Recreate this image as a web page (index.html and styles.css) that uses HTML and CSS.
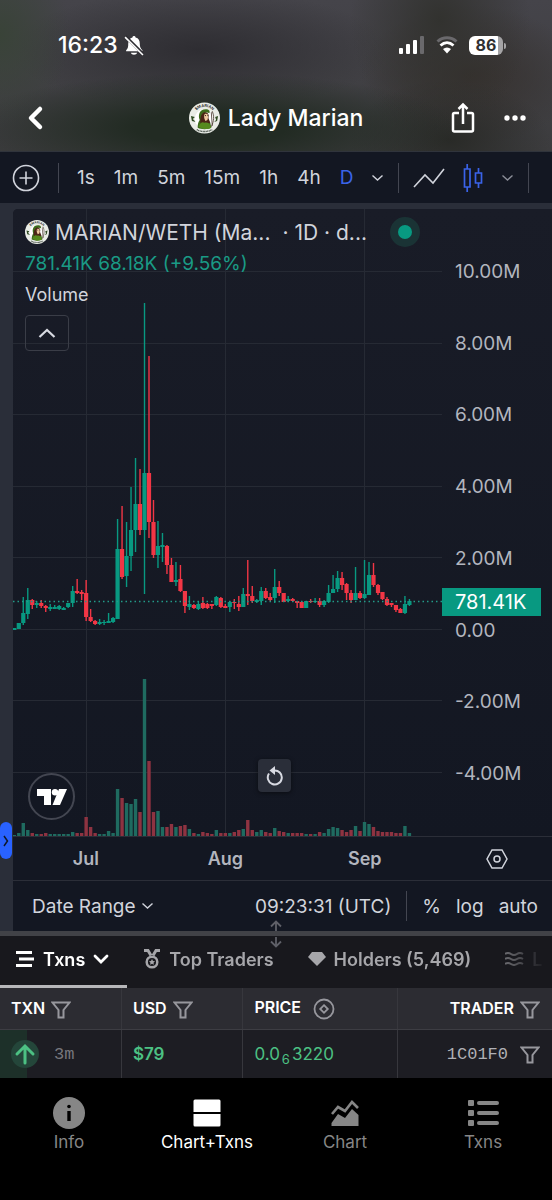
FILE: index.html
```
<!DOCTYPE html>
<html lang="en">
<head>
    <meta charset="UTF-8">
    <meta name="viewport" content="width=device-width, initial-scale=1">
    <title>Lady Marian</title>
    <link rel="stylesheet" href="styles.css">
</head>
<body>
    <svg class="defs" aria-hidden="true">
        <symbol id="avatar" viewBox="0 0 32 32">
            <circle cx="16" cy="16" r="16" fill="#e9ece6"/>
            <path id="ring" d="M4.500 16a11.500 11.500 0 0 1 23 0" fill="none"/>
            <text class="avatar-text"><textPath href="#ring" startOffset="50%" text-anchor="middle">$MARIAN</textPath></text>
            <path d="M2 14l4 1-2 2 3 3-4-1zM30 14l-3 1 1 3-2 2 3-1zM7 25l3 2M25 25l-3 2" fill="#2f4a22"/>
            <circle cx="16" cy="17" r="10" fill="#fff"/>
            <path d="M9 26c0-5 1-6 2-8-2-5 0-11 6-11 4 0 5 2 4 4-3-2-6 0-6 4l-1 6 8 0 1 5c-4 2-10 2-14 0z" fill="#3d6b1c"/>
            <path d="M12 22c-1-4 0-11 4-12 4 0 5 3 4 6l2 5-3 1z" fill="#4b2417"/>
            <path d="M16 12c2-1 4 0 4 2l-1 4-2 1c-1-2-2-4-1-7z" fill="#efc9a0"/>
            <path d="M16.500 13.500h1M19 13.500h1" stroke="#2a1a12"/>
            <path d="M10 25c2-5 4-5 6-4 3-1 6 1 7 5-4 2-9 2-13-1z" fill="#568a1e"/>
            <path d="M24 9c2 5 2 10-1 16M23 10l1 14" fill="none" stroke="#3b2b20" stroke-width=".8"/>
            <path d="M8 28q8 4 16 0" fill="none" stroke="#39433a" stroke-width="1.500" stroke-dasharray="1 .6"/>
        </symbol>
        <symbol id="funnel" viewBox="0 0 20 18">
            <path d="M1.500 1.500h17L12.500 9v7.500h-5V9z" fill="none" stroke="currentColor" stroke-width="2"/>
        </symbol>
        <symbol id="chevron" viewBox="0 0 12 8">
            <path d="M1 1.500l5 4.500 5-4.500" fill="none" stroke="currentColor" stroke-width="1.400"/>
        </symbol>
    </svg>

    <header class="header">
        <div class="status">
            <div class="status-left">
                <span class="clock">16:23</span>
                <svg width="20" height="21" viewBox="0 0 19 20">
                    <path d="M9.500 1a1.500 1.500 0 0 1 1.500 1.300c3 .7 4 3 4 5.700 0 3 .5 4.500 2.500 6.500v1H2v-1C4 12.500 4 11 4 8c0-2.700 1.500-5 4-5.700A1.500 1.500 0 0 1 9.500 1zM6.500 17h6c-.5 2.500-5.500 2.500-6 0z" fill="#fff"/>
                    <path d="M1 1l17 17" stroke="#302f34" stroke-width="3"/>
                    <path d="M1 2l17 17" stroke="#fff" stroke-width="1.500"/>
                </svg>
            </div>
            <div class="status-right">
                <svg width="26" height="18" viewBox="0 0 26 18">
                    <rect x="0" y="12" width="4" height="6" rx="1" fill="#fff"/>
                    <rect x="7" y="8" width="4" height="10" rx="1" fill="#fff"/>
                    <rect x="14" y="4" width="4" height="14" rx="1" fill="#fff"/>
                    <rect x="21" y="0" width="4" height="18" rx="1" fill="#6a696c"/>
                </svg>
                <svg width="22" height="18" viewBox="0 0 22 18">
                    <path d="M1.500 5.500c5.500-5 13.500-5 19 0" fill="none" stroke="#6a696c" stroke-width="3"/>
                    <path d="M4.500 9.500c4-3.700 9-3.700 13 0" fill="none" stroke="#fff" stroke-width="2.800"/>
                    <path d="M11 17.500l-4-4.500c2.500-2 5.500-2 8 0z" fill="#fff"/>
                </svg>
                <div class="battery"><span class="battery-level">86</span></div>
            </div>
        </div>
        <div class="title-bar">
            <button class="icon-btn back" aria-label="Back">
                <svg width="18" height="26" viewBox="0 0 18 26"><path d="M14 4L5 13l9 9" fill="none" stroke="#fff" stroke-width="4.500" stroke-linecap="round" stroke-linejoin="round"/></svg>
            </button>
            <h1 class="title"><svg class="title-avatar"><use href="#avatar"/></svg>Lady Marian</h1>
            <div class="title-actions">
                <button class="icon-btn" aria-label="Share">
                    <svg width="24" height="32" viewBox="0 0 24 32"><path d="M8 11H3.500Q2 11 2 12.500V28q0 1.500 1.500 1.500h17Q22 29.500 22 28V12.500Q22 11 20.500 11H16M12 22V3M7.500 7L12 2.500 16.500 7" fill="none" stroke="#fff" stroke-width="2.500"/></svg>
                </button>
                <button class="icon-btn" aria-label="More">
                    <svg width="22" height="6" viewBox="0 0 22 6" fill="#fff"><circle cx="3" cy="3" r="2.700"/><circle cx="11" cy="3" r="2.700"/><circle cx="19" cy="3" r="2.700"/></svg>
                </button>
            </div>
        </div>
    </header>

    <main>
        <div class="toolbar">
            <button class="icon-btn" aria-label="Compare">
                <svg width="28" height="28" viewBox="0 0 28 28" fill="none" stroke="#d1d4dc" stroke-width="1.600"><circle cx="14" cy="14" r="12.500"/><path d="M14 7.500v13M7.500 14h13"/></svg>
            </button>
            <span class="divider"></span>
            <div class="intervals">
                <button>1s</button>
                <button>1m</button>
                <button>5m</button>
                <button>15m</button>
                <button>1h</button>
                <button>4h</button>
                <button class="selected">D</button>
            </div>
            <button class="icon-btn" aria-label="More intervals"><svg class="chevron"><use href="#chevron"/></svg></button>
            <span class="divider divider-near"></span>
            <button class="icon-btn" aria-label="Line chart">
                <svg width="32" height="22" viewBox="0 0 32 22"><path d="M1 20L12 8l8 8L31 2" fill="none" stroke="#d1d4dc" stroke-width="1.600"/></svg>
            </button>
            <button class="icon-btn" aria-label="Candles">
                <svg width="20" height="28" viewBox="0 0 20 28"><path d="M1.500 5h5.500v18H1.500zM4.200 0v5M4.200 23v5M12.500 9h6v10h-6zM15.500 4v5M15.500 19v5" fill="none" stroke="#3a63e8" stroke-width="1.700"/></svg>
            </button>
            <button class="icon-btn" aria-label="Chart types"><svg class="chevron dim"><use href="#chevron"/></svg></button>
            <span class="divider divider-near"></span>
        </div>

        <div class="chart-frame">
            <div class="chart">
                <div class="pane">
                    <svg class="plot" id="plot" viewBox="13 209 429 627" preserveAspectRatio="xMinYMin meet"></svg>
                    <div class="scale">
                        <span>10.00M</span>
                        <span>8.00M</span>
                        <span>6.00M</span>
                        <span>4.00M</span>
                        <span>2.00M</span>
                        <span>0.00</span>
                        <span>-2.00M</span>
                        <span>-4.00M</span>
                    </div>
                    <span class="price-tag">781.41K</span>
                    <div class="legend">
                        <div class="legend-title">
                            <svg class="legend-avatar"><use href="#avatar"/></svg>
                            <span class="pair">MARIAN/WETH (Ma...</span>
                            <span>· 1D · d...</span>
                            <span class="live"></span>
                        </div>
                        <div class="legend-values"><span>781.41K</span> <span>68.18K (+9.56%)</span></div>
                        <div class="legend-volume">Volume</div>
                        <button class="collapse" aria-label="Collapse">
                            <svg width="18" height="12" viewBox="0 0 18 12"><path d="M1.500 10L9 3l7.500 7" fill="none" stroke="#d8dae2" stroke-width="2.200"/></svg>
                        </button>
                    </div>
                    <a class="tv-logo" href="#" aria-label="TradingView">
                        <svg width="32" height="18" viewBox="0 0 32 18" fill="#fff"><path d="M1 1h14v16H8V8H1zM23 1h8l-7 16h-7.500z"/><circle cx="19" cy="4.200" r="3.200"/></svg>
                    </a>
                    <button class="reset" aria-label="Reset chart">
                        <svg width="18" height="20" viewBox="0 0 18 20"><path d="M3 7.500A7 7 0 1 0 8 4.500" fill="none" stroke="#d8dae2" stroke-width="2"/><path d="M9 0v9L3.500 4.500z" fill="#d8dae2"/></svg>
                    </button>
                </div>
                <div class="time-axis">
                    <div class="months"><span>Jul</span><span>Aug</span><span>Sep</span></div>
                    <button class="icon-btn" aria-label="Axis settings">
                        <svg width="22" height="20" viewBox="0 0 22 20" fill="none" stroke="#d1d4dc" stroke-width="1.500"><path d="M6 1h10l5 9-5 9H6l-5-9z"/><circle cx="11" cy="10" r="3"/></svg>
                    </button>
                </div>
                <div class="range-bar">
                    <button class="range">Date Range <svg class="chevron"><use href="#chevron"/></svg></button>
                    <button>09:23:31 (UTC)</button>
                    <span class="divider"></span>
                    <button>%</button>
                    <button>log</button>
                    <button>auto</button>
                </div>
            </div>
            <button class="drawer" aria-label="Open drawing tools">
                <svg width="6" height="12" viewBox="0 0 6 12"><path d="M1 1l3.500 5L1 11" fill="none" stroke="#101828" stroke-width="1.500"/></svg>
            </button>
        </div>

        <div class="tabs-wrap">
            <svg class="resize" width="12" height="28" viewBox="0 0 12 28"><path d="M6 11V2M1 6.500L6 1.500l5 5M6 17v9M1 21.500l5 5 5-5" fill="none" stroke="#5f6068" stroke-width="1.800"/></svg>
            <nav class="tabs">
                <button class="tab active">
                    <svg width="19" height="18" viewBox="0 0 19 18" stroke="#fff" stroke-width="3"><path d="M0 2.500h16M3 9h15M0 15.500h16"/></svg>
                    Txns
                    <svg width="16" height="11" viewBox="0 0 16 11"><path d="M2 2l6 6 6-6" fill="none" stroke="#fff" stroke-width="2.800" stroke-linecap="round"/></svg>
                </button>
                <button class="tab">
                    <svg width="18" height="20" viewBox="0 0 18 20" fill="none" stroke="#a6a6aa"><circle cx="9" cy="13" r="5.300" stroke-width="2.500"/><path d="M1 1.500h4l3 5M17 1.500h-4l-3 5" stroke-width="3"/><path d="M9 10l1 2 2 .3-1.500 1.400.4 2L9 14.700l-1.900 1 .4-2L6 12.300l2-.3z" fill="#a6a6aa" stroke="none"/></svg>
                    Top Traders
                </button>
                <button class="tab">
                    <svg width="18" height="16" viewBox="0 0 18 16"><path d="M4 1h10l4 5-9 9-9-9z" fill="#a6a6aa"/></svg>
                    Holders (5,469)
                </button>
                <button class="tab">
                    <svg width="19" height="14" viewBox="0 0 19 14"><path d="M0 2q3-2 6 0t6 0 6 0M0 7q3-2 6 0t6 0 6 0M0 12q3-2 6 0t6 0 6 0" fill="none" stroke="#a6a6aa" stroke-width="2"/></svg>
                    L
                </button>
            </nav>
        </div>

        <table class="txns">
            <thead>
                <tr>
                    <th>TXN<svg class="funnel"><use href="#funnel"/></svg></th>
                    <th>USD<svg class="funnel"><use href="#funnel"/></svg></th>
                    <th class="price">PRICE<svg class="unit" viewBox="0 0 22 22" fill="none" stroke="#97979d" stroke-width="1.800"><circle cx="11" cy="11" r="9.500"/><path d="M11 7.200l3.800 3.800-3.800 3.800L7.200 11z"/></svg></th>
                    <th class="trader">TRADER<svg class="funnel"><use href="#funnel"/></svg></th>
                </tr>
            </thead>
            <tbody>
                <tr>
                    <td class="buy"><svg class="arrow" viewBox="0 0 28 28"><circle cx="14" cy="14" r="14" fill="#24463a"/><path d="M14 23V7M6 14l8-8 8 8" fill="none" stroke="#4cc183" stroke-width="3" stroke-linecap="round"/></svg><span class="age">3m</span></td>
                    <td class="usd">$79</td>
                    <td class="amount">0.0<sub>6</sub>3220</td>
                    <td class="trader"><a href="#">1C01F0</a><svg class="funnel"><use href="#funnel"/></svg></td>
                </tr>
            </tbody>
        </table>
    </main>

    <nav class="bottom-nav">
        <a href="#">
            <svg viewBox="0 0 34 34"><circle cx="17" cy="17" r="16" fill="#868686"/><circle cx="17" cy="10.500" r="1.800"/><path d="M15.300 15h3.400v10h-3.400z"/></svg>
            Info
        </a>
        <a href="#" class="current">
            <svg viewBox="0 0 34 34" fill="#fff"><path d="M5 3.500h24q1.500 0 1.500 1.500v11h-27V5q0-1.500 1.500-1.500zM3.500 18h27v11q0 1.500-1.500 1.500H5q-1.500 0-1.500-1.500z"/></svg>
            Chart+Txns
        </a>
        <a href="#">
            <svg viewBox="0 0 34 34"><path d="M4 18l6-7 7 4 7-9 6 6" fill="none" stroke="#868686" stroke-width="2.600"/><path d="M3.500 30v-3L10 18l7 4 7-9 6.500 6v11z" fill="#868686"/></svg>
            Chart
        </a>
        <a href="#">
            <svg viewBox="0 0 34 34" fill="#868686"><rect x="2" y="4" width="6" height="6" rx="1"/><rect x="2" y="14" width="6" height="6" rx="1"/><rect x="2" y="24" width="6" height="6" rx="1"/><rect x="11" y="5" width="22" height="4" rx="2"/><rect x="11" y="15" width="22" height="4" rx="2"/><rect x="11" y="25" width="22" height="4" rx="2"/></svg>
            Txns
        </a>
    </nav>
    <script src="chart.js"></script>
</body>
</html>
```
FILE: styles.css
```
* {
    margin: 0;
    padding: 0;
    box-sizing: border-box;
}

body {
    font-family: Inter, "Liberation Sans", sans-serif;
    background: #000;
    color: #d1d4dc;
    min-height: 100vh;
    overflow-x: hidden;
}

button {
    font: inherit;
    color: inherit;
    background: none;
    border: 0;
    cursor: pointer;
}

a {
    color: inherit;
    text-decoration: none;
}

svg {
    flex: none;
}

.defs {
    position: absolute;
    width: 0;
    height: 0;
    overflow: visible;
}

.avatar-text {
    font: 700 4px Inter, sans-serif;
    fill: #333;
}

.icon-btn {
    display: flex;
    align-items: center;
    justify-content: center;
}

/* header */
.header {
    height: 151px;
    color: #fff;
    background:
        radial-gradient(ellipse 70px 90px at 0 35px, #394338, transparent),
        radial-gradient(ellipse 250px 55px at 210px 128px, #222b23 30%, transparent),
        radial-gradient(ellipse 90px 110px at 440px 20px, #32322f, transparent),
        radial-gradient(ellipse 100px 60px at 450px 140px, #292a27, transparent),
        radial-gradient(ellipse 110px 70px at 470px 75px, #35302d, transparent),
        radial-gradient(ellipse 190px 60px at 200px 50px, #2e2d32, transparent),
        linear-gradient(#45444a, #3c3c3e);
}

.status {
    height: 90px;
    display: flex;
    align-items: center;
    justify-content: space-between;
    padding: 0 49px 0 58px;
}

.status-left,
.status-right {
    display: flex;
    align-items: center;
}

.status-left {
    gap: 6px;
}

.status-right {
    gap: 11px;
}

.clock {
    font-size: 23px;
    font-weight: 500;
}

.battery {
    position: relative;
    width: 34px;
    height: 19px;
    border-radius: 6px;
    background: linear-gradient(90deg, #fff 86%, #a5a4a6 86%);
    color: #303032;
    line-height: 19px;
}

.battery::after {
    content: '';
    position: absolute;
    left: 35px;
    top: 7px;
    width: 2px;
    height: 6px;
    border-radius: 0 2px 2px 0;
    background: #a5a4a6;
}

.battery-level {
    display: block;
    text-align: center;
    font-size: 16px;
    font-weight: 700;
}

.title-bar {
    height: 56px;
    display: grid;
    grid-template-columns: 1fr auto 1fr;
    align-items: center;
    padding: 0 26px;
}

.back {
    justify-self: start;
}

.title {
    display: flex;
    align-items: center;
    gap: 8px;
    font-size: 23px;
    font-weight: 500;
    white-space: nowrap;
}

.title-avatar {
    width: 31px;
    height: 32px;
}

.title-actions {
    justify-self: end;
    display: flex;
    align-items: center;
    gap: 29px;
}

/* chart toolbar */
.toolbar {
    height: 52px;
    display: flex;
    align-items: center;
    gap: 18px;
    padding-left: 12px;
    background: #131722;
    border-top: 1px solid #30343c;
    font-size: 19px;
    overflow: hidden;
}

.divider {
    flex: none;
    width: 1px;
    height: 30px;
    background: #434651;
}

.intervals {
    display: flex;
    gap: 19px;
}

.toolbar .selected {
    color: #3a63e8;
}

.chevron {
    width: 13px;
    height: 8px;
}

.chevron.dim {
    color: #8b8e98;
}

.divider-near {
    margin: 0 -4px;
}

/* chart */
.chart-frame {
    position: relative;
    padding: 6px 0 0 13px;
    background: #2a2e39;
}

.chart {
    background: #131722;
    border-top-left-radius: 5px;
    overflow: hidden;
}

.pane {
    position: relative;
    display: grid;
    grid-template-columns: 1fr 110px;
    background: linear-gradient(#191c27, #131722);
    border-bottom: 1px solid #2b2e38;
}

.plot {
    width: 100%;
    display: block;
}

.grid {
    stroke: #262a34;
}

.up {
    fill: #089981;
    stroke: #089981;
}

.down {
    fill: #f23645;
    stroke: #f23645;
}

.candles path {
    stroke-width: 1.4;
}

.candles rect {
    stroke: none;
}

.bars .up {
    fill: #1f6b60;
    stroke: none;
}

.bars .down {
    fill: #8e3341;
    stroke: none;
}

.last-price {
    stroke: #239b88;
    stroke-width: 1.5;
    stroke-dasharray: 1.5 3;
}

.scale {
    display: flex;
    flex-direction: column;
    justify-content: space-between;
    padding: 53px 0 52px 13px;
    font-size: 19px;
    line-height: 20px;
    color: #b2b5be;
}

.price-tag {
    position: absolute;
    right: 11px;
    top: 379px;
    width: 99px;
    padding-left: 13px;
    background: #089981;
    color: #fff;
    font-size: 20px;
    line-height: 28px;
}

.legend {
    position: absolute;
    top: 8px;
    left: 12px;
}

.legend-title {
    display: flex;
    align-items: center;
    height: 30px;
    font-size: 21px;
    white-space: nowrap;
}

.legend-avatar {
    width: 24px;
    height: 24px;
    margin-right: 6px;
}

.pair {
    margin-right: 12px;
}

.live {
    width: 30px;
    height: 30px;
    margin-left: 23px;
    border: 8px solid #1a3335;
    border-radius: 50%;
    background: #089981;
}

.legend-values {
    font-size: 19px;
    line-height: 33px;
    color: #1a9a85;
}

.legend-volume {
    font-size: 18px;
    line-height: 30px;
}

.collapse {
    display: flex;
    align-items: center;
    justify-content: center;
    width: 44px;
    height: 36px;
    margin-top: 5px;
    border: 1px solid #3a3d47;
    border-radius: 4px;
}

.tv-logo {
    position: absolute;
    left: 15px;
    bottom: 16px;
    width: 47px;
    height: 47px;
    display: flex;
    align-items: center;
    justify-content: center;
    border: 2px solid #434651;
    border-radius: 50%;
    background: #131722;
}

.reset {
    position: absolute;
    left: 245px;
    bottom: 44px;
    width: 33px;
    height: 33px;
    display: flex;
    align-items: center;
    justify-content: center;
    border-radius: 4px;
    background: #2a2e39;
    box-shadow: 0 1px 4px rgba(0, 0, 0, 0.5);
}

.time-axis {
    display: grid;
    grid-template-columns: 1fr 110px;
    align-items: center;
    height: 44px;
    border-bottom: 1px solid #2b2e38;
}

.months {
    display: grid;
    grid-template-columns: 34% 31% 34%;
    font-size: 18px;
    font-weight: 600;
    color: #b2b5be;
    text-align: center;
}

.range-bar {
    display: flex;
    align-items: center;
    gap: 15px;
    height: 50px;
    padding: 0 14px 0 19px;
    font-size: 19px;
    white-space: nowrap;
}

.range {
    margin-right: auto;
}

.range .chevron {
    margin-bottom: 3px;
}

.drawer {
    position: absolute;
    left: 0;
    bottom: 72px;
    width: 12px;
    height: 37px;
    border-radius: 6px;
    background: #2962ff;
    display: flex;
    align-items: center;
    justify-content: center;
}

/* tabs */
.tabs-wrap {
    position: relative;
    border-top: 5px solid #414247;
    background: #18181d;
}

.resize {
    position: absolute;
    left: calc(50% - 6px);
    top: -16px;
}

.tabs {
    display: flex;
    gap: 16px;
    height: 52px;
    overflow: hidden;
    -webkit-mask-image: linear-gradient(90deg, #000 86%, transparent 99%);
    mask-image: linear-gradient(90deg, #000 86%, transparent 99%);
}

.tab {
    display: flex;
    flex: none;
    align-items: center;
    gap: 8px;
    padding: 0 18px 3px 0;
    border-bottom: 3px solid transparent;
    color: #a6a6aa;
    font-size: 18px;
    font-weight: 600;
    white-space: nowrap;
}

.tab.active {
    padding-left: 16px;
    border-bottom-color: #b7b7ba;
    color: #fff;
}

/* transactions */
.txns {
    width: 100%;
    table-layout: fixed;
    border-collapse: collapse;
}

.txns th,
.txns td {
    text-align: left;
    padding: 0 12px 0 11px;
    white-space: nowrap;
    vertical-align: middle;
}

.txns th + th,
.txns td + td {
    border-left: 1px solid #37373d;
}

.txns th {
    width: 22%;
    height: 41px;
    background: #2c2c32;
    border-bottom: 1px solid #3d3d43;
    color: #fff;
    font-size: 16px;
    font-weight: 600;
}

.txns th.price,
.txns th.trader {
    width: 28%;
}

.txns td {
    height: 49px;
    background: #1d1d23;
    font-size: 17px;
}

.txns .trader {
    text-align: right;
}

.funnel {
    width: 20px;
    height: 18px;
    margin-left: 6px;
    color: #97979d;
    vertical-align: middle;
}

.unit {
    width: 22px;
    height: 22px;
    margin-left: 12px;
    vertical-align: middle;
}

.txns td.buy {
    background: linear-gradient(90deg, #1d3029 27px, #1d1d23 27px);
}

.arrow {
    width: 28px;
    height: 28px;
    margin-right: 15px;
    vertical-align: middle;
}

.age,
.txns td a {
    font-family: "Liberation Mono", monospace;
    color: #77777d;
    vertical-align: middle;
}

.txns td a {
    margin-right: 6px;
    color: #b0b0b5;
}

.txns td.usd {
    color: #4cc183;
    font-weight: 600;
}

.amount {
    color: #4cc183;
}

.amount sub {
    margin: 0 2px;
    font-size: 13px;
    line-height: 0;
    vertical-align: -4px;
}

/* bottom navigation */
.bottom-nav {
    display: grid;
    grid-template-columns: repeat(4, 1fr);
    padding-top: 18px;
    font-size: 17px;
    line-height: 24px;
    color: #868686;
}

.bottom-nav a {
    display: flex;
    flex-direction: column;
    align-items: center;
}

.bottom-nav svg {
    width: 34px;
    height: 34px;
}

.bottom-nav .current {
    color: #fff;
}
```
FILE: chart.js
```
// one row per day: direction, high, body top, body bottom, low, volume
const days = [
    ['u', 628, 628, 630, 630, 1], ['u', 623, 623, 629, 629, 3], ['u', 597, 613, 623, 625, 13], ['u', 588, 600, 614, 619, 6],
    ['d', 599, 600, 605, 609, 3], ['u', 601, 603, 605, 608, 2], ['d', 600, 603, 606, 608, 2], ['d', 605, 606, 608, 612, 3],
    ['u', 604, 607, 609, 611, 2], ['u', 605, 607, 609, 609, 2], ['u', 605, 606, 609, 610, 2], ['u', 607, 608, 610, 610, 2],
    ['u', 603, 603, 607, 608, 2], ['u', 586, 591, 603, 607, 4], ['d', 579, 591, 593, 594, 3], ['d', 590, 592, 594, 600, 3],
    ['d', 580, 593, 617, 621, 19], ['d', 609, 617, 621, 622, 9], ['d', 620, 621, 624, 625, 3], ['u', 619, 622, 624, 625, 2],
    ['u', 620, 622, 623, 625, 2], ['u', 613, 621, 623, 623, 5], ['u', 617, 618, 622, 623, 3], ['u', 519, 549, 619, 619, 47],
    ['d', 506, 549, 577, 579, 38], ['u', 522, 556, 576, 587, 33], ['u', 487, 530, 556, 571, 32], ['u', 458, 504, 530, 552, 37],
    ['d', 469, 504, 530, 535, 24], ['u', 303, 473, 530, 594, 157], ['d', 356, 473, 522, 538, 75], ['d', 500, 522, 555, 558, 24],
    ['u', 521, 546, 555, 568, 25], ['u', 533, 545, 547, 562, 9], ['d', 545, 546, 565, 574, 9], ['d', 558, 565, 582, 582, 12],
    ['u', 562, 580, 582, 586, 9], ['d', 565, 579, 591, 592, 10], ['d', 591, 591, 606, 613, 11], ['u', 596, 604, 607, 610, 7],
    ['d', 604, 605, 608, 609, 3], ['u', 601, 604, 609, 610, 2], ['d', 597, 603, 608, 609, 4], ['d', 603, 604, 608, 609, 3],
    ['d', 604, 604, 606, 609, 2], ['u', 596, 597, 605, 606, 6], ['d', 597, 598, 607, 608, 3], ['d', 604, 606, 608, 608, 3],
    ['u', 601, 602, 607, 612, 3], ['d', 599, 602, 603, 609, 4], ['d', 596, 604, 607, 611, 6], ['u', 588, 594, 607, 607, 7],
    ['d', 560, 594, 596, 605, 16], ['d', 586, 596, 601, 603, 6], ['u', 599, 600, 602, 603, 4], ['u', 587, 591, 601, 605, 6],
    ['d', 588, 591, 598, 599, 4], ['d', 593, 597, 600, 601, 3], ['u', 569, 587, 598, 603, 8], ['d', 581, 587, 593, 596, 5],
    ['d', 593, 593, 602, 602, 4], ['u', 596, 599, 601, 602, 3], ['d', 598, 599, 601, 602, 3], ['d', 601, 601, 603, 608, 3],
    ['d', 601, 602, 608, 608, 3], ['u', 601, 601, 608, 608, 2], ['d', 599, 601, 602, 603, 2], ['u', 598, 601, 602, 603, 2],
    ['d', 598, 601, 605, 607, 4], ['u', 600, 601, 605, 607, 3], ['u', 585, 593, 602, 603, 7], ['u', 575, 589, 593, 593, 9],
    ['u', 571, 578, 589, 592, 8], ['d', 572, 578, 585, 590, 6], ['d', 583, 584, 593, 600, 4], ['d', 590, 593, 600, 603, 6],
    ['u', 567, 593, 600, 600, 10], ['d', 591, 593, 598, 599, 5], ['u', 560, 594, 598, 599, 14], ['u', 562, 575, 595, 595, 12],
    ['d', 563, 575, 585, 587, 9], ['d', 584, 585, 593, 595, 5], ['d', 592, 592, 599, 600, 4], ['d', 597, 599, 605, 606, 4],
    ['d', 603, 603, 605, 607, 4], ['d', 605, 605, 610, 612, 3], ['d', 608, 609, 613, 613, 3], ['u', 596, 604, 613, 614, 10],
    ['u', 599, 601, 605, 606, 3]
];

const firstX = 14.3;
const step = 4.49;
const base = 836;
const price = 601.5;

let grid = '';
for (let i = 0; i < 8; i++) {
    const y = Math.round(272 + i * 71.5) - 0.5;
    grid += `M13 ${y}H442`;
}
[86.5, 225.5, 364.5].forEach(x => { grid += `M${x} 209V836`; });

let bars = '';
let candles = '';
days.forEach(([dir, high, top, bottom, low, volume], i) => {
    const x = firstX + i * step;
    const name = dir === 'u' ? 'up' : 'down';
    bars += `<rect class="${name}" x="${x - 1.7}" y="${base - volume}" width="3.4" height="${volume}"/>`;
    candles += `<path class="${name}" d="M${x} ${high}V${low}"/>`;
    candles += `<rect class="${name}" x="${x - 2.1}" y="${top}" width="4.2" height="${bottom - top}"/>`;
});

document.getElementById('plot').innerHTML =
    `<path class="grid" d="${grid}"/>` +
    `<g class="bars">${bars}</g>` +
    `<g class="candles">${candles}</g>` +
    `<path class="last-price" d="M13 ${price}H442"/>`;
```
